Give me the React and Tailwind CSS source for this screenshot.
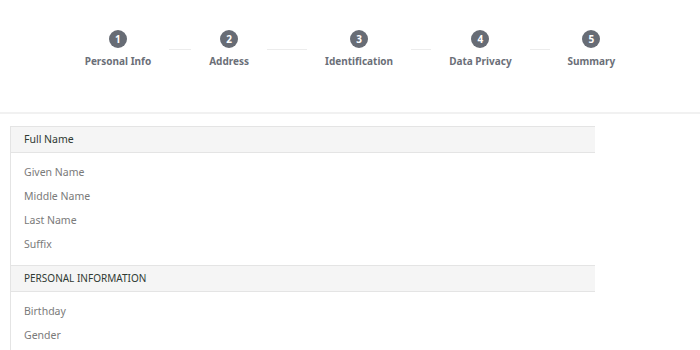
import React from "react";

const steps = ["Personal Info", "Address", "Identification", "Data Privacy", "Summary"];
const lines = ["w-[22px]", "w-[40px]", "w-[20px]", "w-[20px]"];

const Section = ({ title, fields, upper }) => (
  <div>
    <div className={`h-[27px] flex items-center pl-[13px] bg-[#f5f5f5] border-y border-[#e4e4e4] text-[#2f3a33] ${upper ? "text-[10px]" : "text-[10.5px]"}`}>
      {title}
    </div>
    <div className="py-[8px]">
      {fields.map((f) => (
        <div key={f} className="h-[24px] flex items-center pl-[13px] text-[10.5px] text-[#7a7a7a]">
          {f}
        </div>
      ))}
    </div>
  </div>
);

const App = () => {
  return (
    <div className="w-[700px] h-[350px] overflow-hidden bg-white" style={{ fontFamily: "'Noto Sans', Inter, sans-serif" }}>
      <div className="h-[114px] border-b-2 border-[#f1f1f1] flex justify-center pt-[30px]">
        <div className="flex items-start">
          {steps.map((s, i) => (
            <React.Fragment key={s}>
              <div className="flex flex-col items-center">
                <div className="w-[18px] h-[18px] rounded-full bg-[#676c75] text-white text-[10px] font-bold flex items-center justify-center">
                  {i + 1}
                </div>
                <div className="mt-[6px] text-[10px] font-bold text-[#6b6f78] whitespace-nowrap">{s}</div>
              </div>
              {i < lines.length && (
                <div className={`${lines[i]} mx-[18px] mt-[19px] h-px bg-[#ececec]`} />
              )}
            </React.Fragment>
          ))}
        </div>
      </div>
      <div className="pt-[12px] pl-[10px]">
        <div className="w-[585px] border-l border-[#e4e4e4]">
          <Section title="Full Name" fields={["Given Name", "Middle Name", "Last Name", "Suffix"]} />
          <Section title="PERSONAL INFORMATION" upper fields={["Birthday", "Gender"]} />
        </div>
      </div>
    </div>
  );
};

export default App;
